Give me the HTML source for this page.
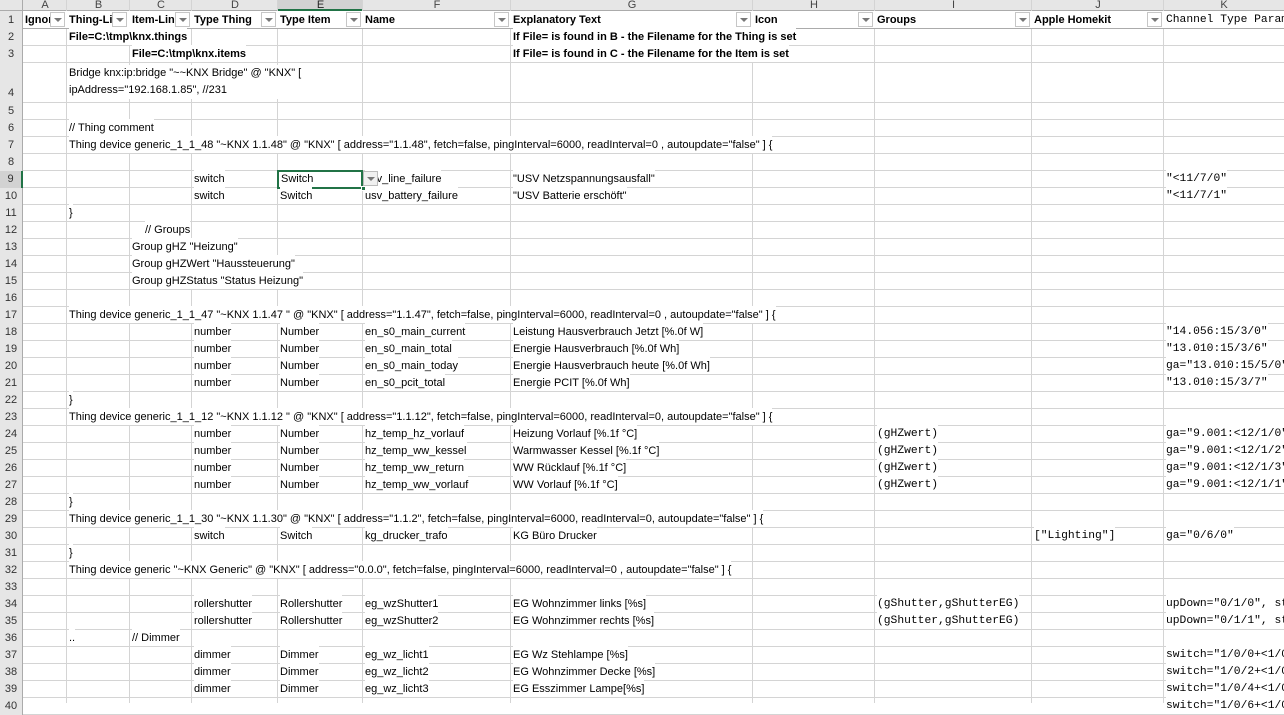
<!DOCTYPE html>
<html><head><meta charset="utf-8"><style>
*{margin:0;padding:0;box-sizing:border-box}
body{width:1284px;height:703px;overflow:hidden;background:#fff;font-family:"Liberation Sans",sans-serif;font-size:11px;color:#000;position:relative}
.v{position:absolute;top:0;width:1px;height:703px;background:#d4d4d4}
.hdr{position:absolute;left:0;top:0;width:1284px;height:11px;background:#e6e6e6;border-bottom:1px solid #ababab}
.hl{position:absolute;top:0;height:11px;text-align:center;font-size:11px;line-height:11px;color:#444}
.rh{position:absolute;left:0;width:23px;background:#e6e6e6;border-right:1px solid #ababab;text-align:center;color:#333;font-size:11px}
.r{position:absolute;left:23px;width:1261px;border-bottom:1px solid #d4d4d4;height:17px}
.r span{position:absolute;white-space:nowrap;line-height:16px;bottom:0;background:#fff;padding-top:1px}
.m{font-family:"Liberation Mono",monospace;font-size:11.3px}
.b{font-weight:bold}
.fb{position:absolute;width:15px;height:15px;top:1px;border:1px solid #c6c6c6;background:#fff}
.fb:after{content:"";position:absolute;left:3px;top:5px;border-left:4px solid transparent;border-right:4px solid transparent;border-top:4px solid #777}
</style></head><body>
<div class="hdr"></div>
<div class="hl" style="left:23px;width:44px">A</div>
<div class="hl" style="left:67px;width:63px">B</div>
<div class="hl" style="left:130px;width:62px">C</div>
<div class="hl" style="left:192px;width:86px">D</div>
<div class="hl" style="left:278px;width:85px;background:#d2d2d2;border-bottom:2px solid #217346;color:#222">E</div>
<div class="hl" style="left:363px;width:148px">F</div>
<div class="hl" style="left:511px;width:242px">G</div>
<div class="hl" style="left:753px;width:122px">H</div>
<div class="hl" style="left:875px;width:157px">I</div>
<div class="hl" style="left:1032px;width:132px">J</div>
<div class="hl" style="left:1164px;width:120px">K</div>

<div class="v" style="left:22px;background:#ababab"></div>
<div class="v" style="left:66px"></div><div class="v" style="left:129px"></div><div class="v" style="left:191px"></div><div class="v" style="left:277px"></div><div class="v" style="left:362px"></div><div class="v" style="left:510px"></div><div class="v" style="left:752px"></div><div class="v" style="left:874px"></div><div class="v" style="left:1031px"></div><div class="v" style="left:1163px"></div>

<div class="rh" style="top:11px;height:18px;line-height:18px">1</div>
<div class="rh" style="top:29px;height:17px;line-height:17px">2</div>
<div class="rh" style="top:46px;height:17px;line-height:17px">3</div>
<div class="rh" style="top:63px;height:40px;line-height:60px">4</div>
<div class="rh" style="top:103px;height:17px;line-height:17px">5</div>
<div class="rh" style="top:120px;height:17px;line-height:17px">6</div>
<div class="rh" style="top:137px;height:17px;line-height:17px">7</div>
<div class="rh" style="top:154px;height:17px;line-height:17px">8</div>
<div class="rh" style="top:171px;height:17px;line-height:17px;background:#d2d2d2;border-right:2px solid #217346">9</div>
<div class="rh" style="top:188px;height:17px;line-height:17px">10</div>
<div class="rh" style="top:205px;height:17px;line-height:17px">11</div>
<div class="rh" style="top:222px;height:17px;line-height:17px">12</div>
<div class="rh" style="top:239px;height:17px;line-height:17px">13</div>
<div class="rh" style="top:256px;height:17px;line-height:17px">14</div>
<div class="rh" style="top:273px;height:17px;line-height:17px">15</div>
<div class="rh" style="top:290px;height:17px;line-height:17px">16</div>
<div class="rh" style="top:307px;height:17px;line-height:17px">17</div>
<div class="rh" style="top:324px;height:17px;line-height:17px">18</div>
<div class="rh" style="top:341px;height:17px;line-height:17px">19</div>
<div class="rh" style="top:358px;height:17px;line-height:17px">20</div>
<div class="rh" style="top:375px;height:17px;line-height:17px">21</div>
<div class="rh" style="top:392px;height:17px;line-height:17px">22</div>
<div class="rh" style="top:409px;height:17px;line-height:17px">23</div>
<div class="rh" style="top:426px;height:17px;line-height:17px">24</div>
<div class="rh" style="top:443px;height:17px;line-height:17px">25</div>
<div class="rh" style="top:460px;height:17px;line-height:17px">26</div>
<div class="rh" style="top:477px;height:17px;line-height:17px">27</div>
<div class="rh" style="top:494px;height:17px;line-height:17px">28</div>
<div class="rh" style="top:511px;height:17px;line-height:17px">29</div>
<div class="rh" style="top:528px;height:17px;line-height:17px">30</div>
<div class="rh" style="top:545px;height:17px;line-height:17px">31</div>
<div class="rh" style="top:562px;height:17px;line-height:17px">32</div>
<div class="rh" style="top:579px;height:17px;line-height:17px">33</div>
<div class="rh" style="top:596px;height:17px;line-height:17px">34</div>
<div class="rh" style="top:613px;height:17px;line-height:17px">35</div>
<div class="rh" style="top:630px;height:17px;line-height:17px">36</div>
<div class="rh" style="top:647px;height:17px;line-height:17px">37</div>
<div class="rh" style="top:664px;height:17px;line-height:17px">38</div>
<div class="rh" style="top:681px;height:17px;line-height:17px">39</div>
<div class="rh" style="top:698px;height:17px;line-height:17px">40</div>

<div class="r b" style="top:11px;height:18px;background:#fff;border-bottom:1px solid #ababab">
<span style="left:2px;width:26px;overflow:hidden">Ignore</span><div class="fb" style="left:27px"></div>
<span style="left:46px;width:44px;overflow:hidden">Thing-Line</span><div class="fb" style="left:89px"></div>
<span style="left:109px;width:44px;overflow:hidden">Item-Line</span><div class="fb" style="left:152px"></div>
<span style="left:171px">Type Thing</span><div class="fb" style="left:238px"></div>
<span style="left:257px">Type Item</span><div class="fb" style="left:323px"></div>
<span style="left:342px">Name</span><div class="fb" style="left:471px"></div>
<span style="left:490px">Explanatory Text</span><div class="fb" style="left:713px"></div>
<span style="left:732px">Icon</span><div class="fb" style="left:835px"></div>
<span style="left:854px">Groups</span><div class="fb" style="left:992px"></div>
<span style="left:1011px">Apple Homekit</span><div class="fb" style="left:1124px"></div>
<span class="m" style="left:1143px;font-weight:normal">Channel Type Parameter</span>
</div>
<div class="r b" style="top:29px"><span style="left:46px">File=C:\tmp\knx.things</span><span style="left:490px">If File= is found in B - the Filename for the Thing is set</span></div>
<div class="r b" style="top:46px"><span style="left:109px">File=C:\tmp\knx.items</span><span style="left:490px">If File= is found in C - the Filename for the Item is set</span></div>
<div class="r" style="top:63px;height:40px"><span style="left:46px;top:2px;bottom:auto;line-height:17px;padding-top:0">Bridge knx:ip:bridge "~~KNX Bridge" @ "KNX" [<br>ipAddress="192.168.1.85", //231</span></div>
<div class="r" style="top:103px"></div>
<div class="r" style="top:120px"><span style="left:46px">// Thing comment</span></div>
<div class="r" style="top:137px"><span style="left:46px">Thing device generic_1_1_48 "~KNX 1.1.48" @ "KNX" [ address="1.1.48", fetch=false, pingInterval=6000, readInterval=0 , autoupdate="false" ] {</span></div>
<div class="r" style="top:154px"></div>
<div class="r" style="top:171px"><span style="left:171px">switch</span><span style="left:342px">usv_line_failure</span><span style="left:490px">"USV Netzspannungsausfall"</span><span class="m" style="left:1143px">"&lt;11/7/0"</span>
<div style="position:absolute;left:254px;top:-1px;width:86px;height:19px;border:2px solid #217346;background:#fff"><span style="left:2px;bottom:0;line-height:15px;padding:0">Switch</span></div>
<div style="position:absolute;left:338px;top:15px;width:5px;height:5px;background:#217346;border:1px solid #fff"></div>
<div class="fb" style="left:340px;top:0;border-color:#bbb;background:#f0f0f0"></div>
</div>
<div class="r" style="top:188px"><span style="left:171px">switch</span><span style="left:257px">Switch</span><span style="left:342px">usv_battery_failure</span><span style="left:490px">"USV Batterie erschöft"</span><span class="m" style="left:1143px">"&lt;11/7/1"</span></div>
<div class="r" style="top:205px"><span style="left:46px">}</span></div>
<div class="r" style="top:222px"><span style="left:122px">// Groups</span></div>
<div class="r" style="top:239px"><span style="left:109px">Group gHZ "Heizung"</span></div>
<div class="r" style="top:256px"><span style="left:109px">Group gHZWert "Haussteuerung"</span></div>
<div class="r" style="top:273px"><span style="left:109px">Group gHZStatus "Status Heizung"</span></div>
<div class="r" style="top:290px"></div>
<div class="r" style="top:307px"><span style="left:46px">Thing device generic_1_1_47 "~KNX 1.1.47 " @ "KNX" [ address="1.1.47", fetch=false, pingInterval=6000, readInterval=0 , autoupdate="false" ] {</span></div>
<div class="r" style="top:324px"><span style="left:171px">number</span><span style="left:257px">Number</span><span style="left:342px">en_s0_main_current</span><span style="left:490px">Leistung Hausverbrauch Jetzt [%.0f W]</span><span class="m" style="left:1143px">"14.056:15/3/0"</span></div>
<div class="r" style="top:341px"><span style="left:171px">number</span><span style="left:257px">Number</span><span style="left:342px">en_s0_main_total</span><span style="left:490px">Energie Hausverbrauch [%.0f Wh]</span><span class="m" style="left:1143px">"13.010:15/3/6"</span></div>
<div class="r" style="top:358px"><span style="left:171px">number</span><span style="left:257px">Number</span><span style="left:342px">en_s0_main_today</span><span style="left:490px">Energie Hausverbrauch heute [%.0f Wh]</span><span class="m" style="left:1143px">ga="13.010:15/5/0"</span></div>
<div class="r" style="top:375px"><span style="left:171px">number</span><span style="left:257px">Number</span><span style="left:342px">en_s0_pcit_total</span><span style="left:490px">Energie PCIT [%.0f Wh]</span><span class="m" style="left:1143px">"13.010:15/3/7"</span></div>
<div class="r" style="top:392px"><span style="left:46px">}</span></div>
<div class="r" style="top:409px"><span style="left:46px">Thing device generic_1_1_12 "~KNX 1.1.12 " @ "KNX" [ address="1.1.12", fetch=false, pingInterval=6000, readInterval=0, autoupdate="false" ] {</span></div>
<div class="r" style="top:426px"><span style="left:171px">number</span><span style="left:257px">Number</span><span style="left:342px">hz_temp_hz_vorlauf</span><span style="left:490px">Heizung Vorlauf [%.1f °C]</span><span class="m" style="left:854px">(gHZwert)</span><span class="m" style="left:1143px">ga="9.001:&lt;12/1/0"</span></div>
<div class="r" style="top:443px"><span style="left:171px">number</span><span style="left:257px">Number</span><span style="left:342px">hz_temp_ww_kessel</span><span style="left:490px">Warmwasser Kessel [%.1f °C]</span><span class="m" style="left:854px">(gHZwert)</span><span class="m" style="left:1143px">ga="9.001:&lt;12/1/2"</span></div>
<div class="r" style="top:460px"><span style="left:171px">number</span><span style="left:257px">Number</span><span style="left:342px">hz_temp_ww_return</span><span style="left:490px">WW Rücklauf [%.1f °C]</span><span class="m" style="left:854px">(gHZwert)</span><span class="m" style="left:1143px">ga="9.001:&lt;12/1/3"</span></div>
<div class="r" style="top:477px"><span style="left:171px">number</span><span style="left:257px">Number</span><span style="left:342px">hz_temp_ww_vorlauf</span><span style="left:490px">WW Vorlauf [%.1f °C]</span><span class="m" style="left:854px">(gHZwert)</span><span class="m" style="left:1143px">ga="9.001:&lt;12/1/1"</span></div>
<div class="r" style="top:494px"><span style="left:46px">}</span></div>
<div class="r" style="top:511px"><span style="left:46px">Thing device generic_1_1_30 "~KNX 1.1.30" @ "KNX" [ address="1.1.2", fetch=false, pingInterval=6000, readInterval=0, autoupdate="false" ] {</span></div>
<div class="r" style="top:528px"><span style="left:171px">switch</span><span style="left:257px">Switch</span><span style="left:342px">kg_drucker_trafo</span><span style="left:490px">KG Büro Drucker</span><span class="m" style="left:1011px">["Lighting"]</span><span class="m" style="left:1143px">ga="0/6/0"</span></div>
<div class="r" style="top:545px"><span style="left:46px">}</span></div>
<div class="r" style="top:562px"><span style="left:46px">Thing device generic "~KNX Generic" @ "KNX" [ address="0.0.0", fetch=false, pingInterval=6000, readInterval=0 , autoupdate="false" ] {</span></div>
<div class="r" style="top:579px"></div>
<div class="r" style="top:596px"><span style="left:171px">rollershutter</span><span style="left:257px">Rollershutter</span><span style="left:342px">eg_wzShutter1</span><span style="left:490px">EG Wohnzimmer links [%s]</span><span class="m" style="left:854px">(gShutter,gShutterEG)</span><span class="m" style="left:1143px">upDown="0/1/0", stop</span></div>
<div class="r" style="top:613px"><span style="left:171px">rollershutter</span><span style="left:257px">Rollershutter</span><span style="left:342px">eg_wzShutter2</span><span style="left:490px">EG Wohnzimmer rechts [%s]</span><span class="m" style="left:854px">(gShutter,gShutterEG)</span><span class="m" style="left:1143px">upDown="0/1/1", stop</span></div>
<div class="r" style="top:630px"><span style="left:46px">..</span><span style="left:109px">// Dimmer</span></div>
<div class="r" style="top:647px"><span style="left:171px">dimmer</span><span style="left:257px">Dimmer</span><span style="left:342px">eg_wz_licht1</span><span style="left:490px">EG Wz Stehlampe [%s]</span><span class="m" style="left:1143px">switch="1/0/0+&lt;1/0</span></div>
<div class="r" style="top:664px"><span style="left:171px">dimmer</span><span style="left:257px">Dimmer</span><span style="left:342px">eg_wz_licht2</span><span style="left:490px">EG Wohnzimmer Decke [%s]</span><span class="m" style="left:1143px">switch="1/0/2+&lt;1/0</span></div>
<div class="r" style="top:681px"><span style="left:171px">dimmer</span><span style="left:257px">Dimmer</span><span style="left:342px">eg_wz_licht3</span><span style="left:490px">EG Esszimmer Lampe[%s]</span><span class="m" style="left:1143px">switch="1/0/4+&lt;1/0</span></div>
<div class="r" style="top:698px"><span class="m" style="left:1143px">switch="1/0/6+&lt;1/0</span></div>
</body></html>
